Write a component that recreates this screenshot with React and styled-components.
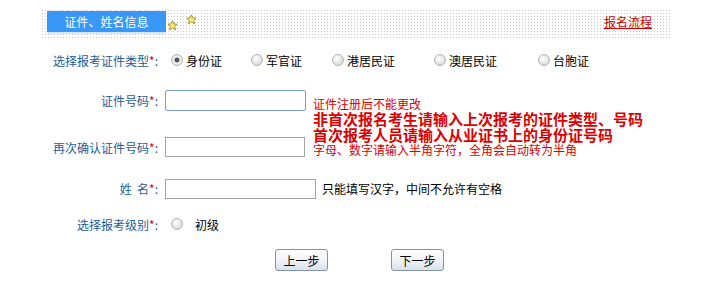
import React from 'react'
import styled, { createGlobalStyle } from 'styled-components'

const GlobalStyle = createGlobalStyle`
  html, body {
    margin: 0;
    padding: 0;
    background: #fff;
  }
  body {
    font-family: "Noto Sans CJK SC", "DejaVu Sans", sans-serif;
    font-size: 12px;
    color: #000;
  }
`

const idTypes = [
  { label: '身份证', width: 80, checked: true },
  { label: '军官证', width: 81 },
  { label: '港居民证', width: 102 },
  { label: '澳居民证', width: 104 },
  { label: '台胞证', width: 80 },
]

function Star({ size }) {
  return (
    <svg width={size} height={size} viewBox="0 0 20 20">
      <polygon
        points="10,1.5 12.6,7.2 18.6,7.6 14,11.6 15.5,18 10,14.6 4.5,18 6,11.6 1.4,7.6 7.4,7.2"
        fill="#f7ec74"
        stroke="#9c8a26"
        strokeWidth="1.6"
        strokeLinejoin="round"
      />
    </svg>
  )
}

function Label({ children }) {
  return (
    <FieldLabel>
      {children}
      <Req>*</Req>:
    </FieldLabel>
  )
}

export default function App() {
  return (
    <Page>
      <GlobalStyle />
      <Header>
        <Tab>证件、姓名信息</Tab>
        <Stars>
          <StarLow>
            <Star size={11} />
          </StarLow>
          <StarHigh>
            <Star size={11} />
          </StarHigh>
        </Stars>
        <FlowLink href="#">报名流程</FlowLink>
      </Header>

      <Row height={44}>
        <Label>选择报考证件类型</Label>
        <Options>
          {idTypes.map((t) => (
            <Option key={t.label} width={t.width}>
              <Radio type="radio" name="idtype" defaultChecked={t.checked} />
              <span>{t.label}</span>
            </Option>
          ))}
        </Options>
      </Row>

      <Group>
        <GroupRows>
          <Row height={37}>
            <Label>证件号码</Label>
            <TextInput width={141} focused />
          </Row>
          <Row height={56}>
            <Label>再次确认证件号码</Label>
            <TextInput width={140} />
          </Row>
        </GroupRows>
        <Notes>
          <NoteSmall>证件注册后不能更改</NoteSmall>
          <NoteBold>非首次报名考生请输入上次报考的证件类型、号码</NoteBold>
          <NoteBold>首次报考人员请输入从业证书上的身份证号码</NoteBold>
          <NoteSmall tight>字母、数字请输入半角字符，全角会自动转为半角</NoteSmall>
        </Notes>
      </Group>

      <Row height={27}>
        <Label>姓&nbsp;&nbsp;名</Label>
        <TextInput width={151} />
        <Hint>只能填写汉字，中间不允许有空格</Hint>
      </Row>

      <Row height={44}>
        <Label>选择报考级别</Label>
        <Options>
          <Option width={60}>
            <Radio type="radio" name="level" />
            <LevelText>初级</LevelText>
          </Option>
        </Options>
      </Row>

      <Buttons>
        <StepButton>上一步</StepButton>
        <StepButton>下一步</StepButton>
      </Buttons>
    </Page>
  )
}

const Page = styled.div`
  width: 722px;
  padding-top: 8px;
`
const Header = styled.div`
  margin-left: 40px;
  width: 630px;
  height: 30px;
  box-sizing: border-box;
  padding: 3px 18px 0 7px;
  display: flex;
  align-items: flex-start;
  background:
    linear-gradient(90deg, #fff 2px, transparent 2px) 0 0 / 3px 3px,
    linear-gradient(#fff 2px, transparent 2px) 0 0 / 3px 3px,
    #c9c9c9;
`
const Tab = styled.div`
  width: 119px;
  height: 21px;
  line-height: 21px;
  background: #3997f7;
  color: #fff;
  font-size: 12px;
  text-align: center;
  box-shadow: 0 2px 0 #d6e6f8;
`
const Stars = styled.div`
  display: flex;
  align-items: flex-start;
  margin-left: 1px;
`
const StarLow = styled.div`
  margin-top: 6px;
`
const StarHigh = styled.div`
  margin-top: 0px;
  margin-left: 8px;
`
const FlowLink = styled.a`
  margin-left: auto;
  margin-top: 2px;
  color: #cc0000;
  font-size: 12px;
  text-decoration: underline;
`
const Row = styled.div`
  display: flex;
  align-items: center;
  height: ${(p) => p.height}px;
`
const FieldLabel = styled.div`
  width: 165px;
  padding-right: 7px;
  box-sizing: border-box;
  text-align: right;
  color: #1c5c98;
  white-space: nowrap;
`
const Req = styled.span`
  color: #e00000;
`
const Options = styled.div`
  display: flex;
  align-items: center;
  padding-left: 6px;
`
const Option = styled.label`
  display: flex;
  align-items: center;
  width: ${(p) => p.width}px;
`
const Radio = styled.input`
  appearance: none;
  margin: 0 3px 0 0;
  width: 12px;
  height: 12px;
  border-radius: 50%;
  border: 1px solid #b5b5b5;
  background: radial-gradient(circle at 40% 35%, #fff 0, #e2e2e2 60%, #cfcfcf 100%);
  box-sizing: border-box;
  flex: none;
  &:checked {
    background: radial-gradient(circle, #555 0 2.2px, #f4f4f4 2.8px, #d6d6d6 100%);
  }
`
const LevelText = styled.span`
  margin-left: 9px;
`
const TextInput = styled.input`
  width: ${(p) => p.width}px;
  height: ${(p) => (p.focused ? 21 : 20)}px;
  box-sizing: border-box;
  border: 1px solid ${(p) => (p.focused ? '#7c9fd6' : '#a5a5a5')};
  border-radius: ${(p) => (p.focused ? '2px' : '0')};
  padding: 0 3px;
  margin: 0;
  outline: none;
  background: #fff;
`
const Group = styled.div`
  display: flex;
  align-items: flex-start;
`
const GroupRows = styled.div`
  display: flex;
  flex-direction: column;
`
const Notes = styled.div`
  padding-top: 14px;
  margin-left: 7px;
  color: #dd0000;
  white-space: nowrap;
`
const NoteSmall = styled.div`
  font-size: 12px;
  line-height: ${(p) => (p.tight ? 13 : 15)}px;
`
const NoteBold = styled.div`
  font-size: 15px;
  font-weight: bold;
  line-height: 16px;
`
const Hint = styled.span`
  margin-left: 6px;
  color: #000;
`
const Buttons = styled.div`
  display: flex;
  gap: 63px;
  padding-left: 275px;
  margin-top: 3px;
`
const StepButton = styled.button`
  width: 53px;
  height: 22px;
  padding: 0;
  font-family: inherit;
  font-size: 12px;
  color: #000;
  border: 1px solid #8393a6;
  border-radius: 3px;
  background: linear-gradient(#ffffff, #f1f4f8 50%, #d9e1ea);
`
